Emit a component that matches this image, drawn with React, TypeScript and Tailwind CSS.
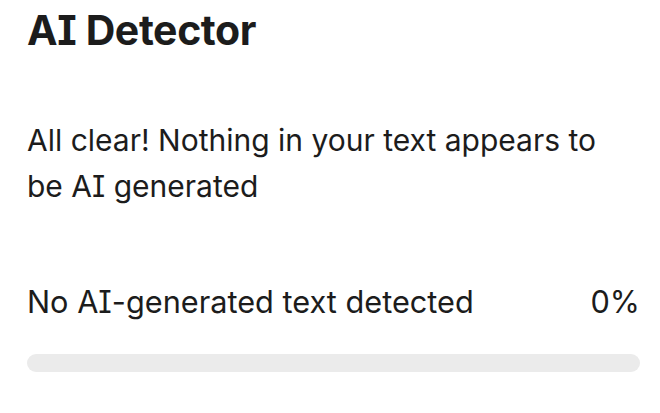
export default function App() {
  return (
    <div className="w-[660px] h-[413px] bg-white pl-[27px] pr-[20px] pt-[6px] text-[#1c1c1c] font-['Inter',sans-serif] [font-feature-settings:'cv08']">
      <h1 className="text-[41px] leading-[48px] font-bold tracking-[-0.4px]">AI Detector</h1>
      <p className="mt-[63px] text-[30px] leading-[46px] pr-[30px]">
        All clear! Nothing in your text appears to be AI generated
      </p>
      <div className="mt-[75px] flex items-center justify-between text-[30.7px] leading-[36px]">
        <span>No AI-generated text detected</span>
        <span>0%</span>
      </div>
      <div className="mt-[34px] h-[18px] w-full rounded-full bg-[#ebebeb]" />
    </div>
  );
}
